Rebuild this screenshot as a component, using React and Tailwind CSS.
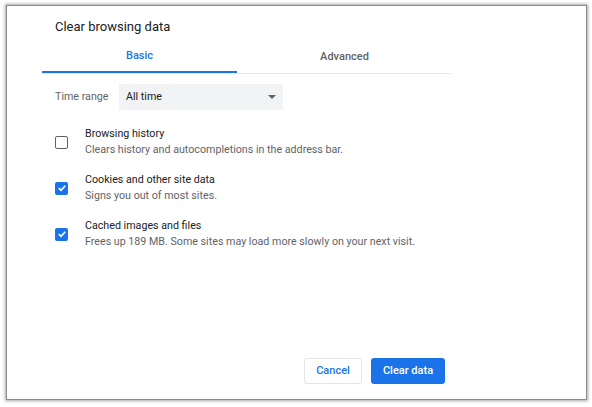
import React from "react";

const font = { fontFamily: "Roboto, 'Liberation Sans', sans-serif" };

function Check({ checked }) {
  if (checked) {
    return (
      <div className="w-[13px] h-[13px] rounded-[2px] bg-[#1a73e8] flex items-center justify-center">
        <svg width="10" height="10" viewBox="0 0 10 10">
          <path d="M1.8 5.2 L4 7.3 L8.3 2.8" stroke="white" strokeWidth="1.6" fill="none" />
        </svg>
      </div>
    );
  }
  return <div className="w-[13px] h-[13px] rounded-[2px] border-[1.5px] border-[#5f6368]" />;
}

function Row({ checked, title, sub }) {
  return (
    <div className="flex items-center">
      <div className="w-[30px] flex">
        <Check checked={checked} />
      </div>
      <div className="flex flex-col">
        <div className="text-[10.7px] leading-[16px] text-[#202124]">{title}</div>
        <div className="text-[10.7px] leading-[16px] text-[#5f6368]">{sub}</div>
      </div>
    </div>
  );
}

export default function App() {
  return (
    <div className="w-[592px] h-[407px] bg-white pt-[5px] pl-[6px]" style={font}>
      <div className="w-[581px] h-[395px] bg-white border border-[#8a8a8a] shadow-[0_0_3px_1px_rgba(0,0,0,0.35)] flex flex-col">
        <div className="pl-[48px] pt-[12px] text-[13px] leading-[18px] text-[#202124]">Clear browsing data</div>
        <div className="ml-[35px] mt-[10px] flex w-[410px] border-b border-[#e8eaed]">
          <div className="w-[195px] h-[27px] flex items-center justify-center pb-[4px] text-[11px] font-medium text-[#1a73e8] border-b-2 border-[#1a73e8] -mb-px">Basic</div>
          <div className="w-[215px] h-[27px] flex items-center justify-center pb-[4px] text-[11px] font-medium text-[#5f6368]">Advanced</div>
        </div>
        <div className="pl-[48px] mt-[10px] flex items-center">
          <div className="w-[64px] text-[10.7px] text-[#5f6368]">Time range</div>
          <div className="w-[164px] h-[26px] bg-[#f1f3f4] flex items-center justify-between pl-[7px] pr-[7px] text-[10.7px] text-[#202124]">
            <span>All time</span>
            <svg width="8" height="4" viewBox="0 0 8 4"><path d="M0 0 L8 0 L4 4 Z" fill="#5f6368" /></svg>
          </div>
        </div>
        <div className="pl-[48px] mt-[16px] flex flex-col gap-[14px]">
          <Row checked={false} title="Browsing history" sub="Clears history and autocompletions in the address bar." />
          <Row checked title="Cookies and other site data" sub="Signs you out of most sites." />
          <Row checked title="Cached images and files" sub="Frees up 189 MB. Some sites may load more slowly on your next visit." />
        </div>
        <div className="flex-1" />
        <div className="flex justify-end gap-[9px] pr-[141px] pb-[15px]">
          <div className="w-[58px] h-[26px] rounded-[3px] border border-[#e3e5e8] flex items-center justify-center text-[11px] font-medium text-[#1a73e8]">Cancel</div>
          <div className="w-[74px] h-[26px] rounded-[3px] bg-[#1a73e8] flex items-center justify-center text-[11px] font-medium text-white">Clear data</div>
        </div>
      </div>
    </div>
  );
}
